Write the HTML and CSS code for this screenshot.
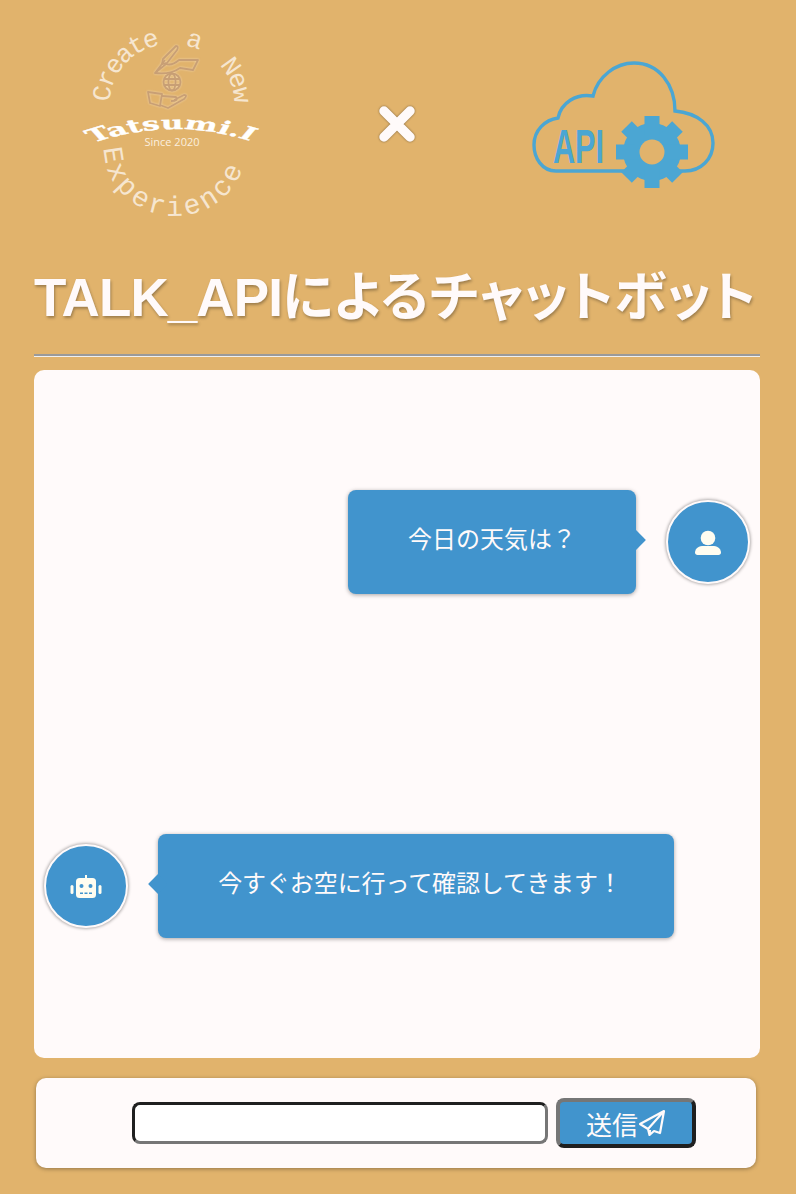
FILE: index.html
```html
<!DOCTYPE html>
<html lang="ja">
<head>
<meta charset="utf-8">
<title>TALK_APIによるチャットボット</title>
<link rel="stylesheet" href="styles.css">
</head>
<body>
<main class="page">
  <header class="logos">
    <svg class="logo-main" viewBox="0 0 220 220" width="220" height="220" aria-label="Tatsumi.I">
      <defs>
        <path id="arcTop" d="M50 92 A62 58 0 0 1 174 92"/>
        <path id="arcMid" d="M64 133 Q112 105 160 134"/>
        <path id="arcBot" d="M44 138 A68 65 0 0 0 186 138"/>
      </defs>
      <g class="logo-glyphs">
        <path d="M116 36 Q119 36 117 40 L107 53 L102 54 L103 49 Z"/>
        <path d="M95 63 L105 50 M106 54 Q112 56 119 50 L138 50 L133 60 L120 58 Q110 65 95 63 Z"/>
        <circle cx="112" cy="72" r="8.500"/>
        <ellipse cx="112" cy="72" rx="3.600" ry="8.500"/>
        <path d="M104 69 H120 M104 75 H120"/>
        <path d="M88 82 L102 84 L100 96 L90 93 Z"/>
        <path d="M102 86 L116 87 Q119 91 111 91 M114 90 L124 85 Q128 85 124 89 L108 98 L100 95"/>
      </g>
      <g class="logo-text-thin">
        <text><textPath href="#arcTop">Create  a  New</textPath></text>
        <text class="logo-lower"><textPath href="#arcBot">Experience</textPath></text>
      </g>
      <g transform="translate(116 0) scale(1.73 1) translate(-112 0)">
        <text class="logo-name"><textPath href="#arcMid">Tatsumi.I</textPath></text>
      </g>
      <text class="logo-since" x="112" y="136" text-anchor="middle">Since 2020</text>
    </svg>
    <svg class="logo-x" viewBox="0 0 40 40" width="40" height="40" aria-label="×">
      <path d="M7 7 L33 33 M33 7 L7 33"/>
    </svg>
    <svg class="logo-api" viewBox="-3 -3 200 150" width="200" height="150" aria-label="API">
      <path class="cloud" d="M135 108 H22 C8 108 0 95 0 82 C0 67 11 57 24 55 C27 40 42 30 59 33 C64 13 82 0 100 0 C125 0 141 22 141 48 C163 50 179 62 179 80 C179 96 167 108 151 108 H142"/>
      <text class="api-text" x="19" y="100" textLength="51" lengthAdjust="spacingAndGlyphs">API</text>
      <g class="gear">
        <circle cx="118" cy="89" r="29"/>
        <rect x="110.500" y="53" width="15" height="72"/>
        <rect x="110.500" y="53" width="15" height="72" transform="rotate(45 118 89)"/>
        <rect x="110.500" y="53" width="15" height="72" transform="rotate(90 118 89)"/>
        <rect x="110.500" y="53" width="15" height="72" transform="rotate(135 118 89)"/>
      </g>
      <circle class="gear-hole" cx="118" cy="89" r="12.500"/>
    </svg>
  </header>

  <h1 class="title"><span class="title-latin">TALK_API</span><span class="title-kana">によるチャットボット</span></h1>
  <hr class="rule">

  <section class="chat">
    <div class="row row-user">
      <p class="bubble bubble-user">今日の天気は？</p>
      <div class="avatar">
        <svg viewBox="0 0 26 25" width="26" height="25">
          <circle cx="13" cy="8" r="7.300"/>
          <path d="M7 16 H19 C23.500 16 26 20 26 22.500 C26 24 25 25 23.500 25 H2.500 C1 25 0 24 0 22.500 C0 20 2.500 16 7 16 Z"/>
        </svg>
      </div>
    </div>
    <div class="row row-bot">
      <div class="avatar">
        <svg viewBox="0 0 32 26" width="32" height="26">
          <rect x="15" y="0" width="2" height="5"/>
          <rect x="6" y="3" width="20" height="20" rx="3.500"/>
          <rect x="0.500" y="10" width="3" height="9" rx="1.500"/>
          <rect x="28.500" y="10" width="3" height="9" rx="1.500"/>
          <g class="robot-face">
            <circle cx="11.500" cy="11" r="2"/>
            <circle cx="20.500" cy="11" r="2"/>
            <rect x="10" y="17.500" width="3" height="1.500"/>
            <rect x="14.500" y="17.500" width="3" height="1.500"/>
            <rect x="19" y="17.500" width="3" height="1.500"/>
          </g>
        </svg>
      </div>
      <p class="bubble bubble-bot">今すぐお空に行って確認してきます！</p>
    </div>
  </section>

  <form class="composer">
    <input class="field" type="text" aria-label="メッセージ">
    <button class="send" type="button">送信<svg viewBox="0 0 28 28" width="28" height="28"><path d="M26 2 L2 15 L10 20 L11.500 26 L16 22 L22 24 Z M26 2 L10 20 M11.500 26 L12 21"/></svg></button>
  </form>
</main>
</body>
</html>
```
FILE: styles.css
```css
* { box-sizing: border-box; }
html, body { margin: 0; padding: 0; }
body {
  background: #e1b36c;
  font-family: "Liberation Sans", "Noto Sans CJK JP", sans-serif;
  overflow: hidden;
}
.page {
  width: 796px;
  height: 1194px;
  padding: 0 36px 0 34px;
}
.logos {
  height: 250px;
  display: flex;
  align-items: flex-start;
  padding: 10px 0 0 26px;
}
.logo-main { flex: none; }
.logo-x { flex: none; margin: 94px 0 0 97px; }
.logo-api { flex: none; margin: 50px 0 0 114px; }

.logo-glyphs {
  fill: none;
  stroke: #c89f75;
  stroke-width: 1.800;
  stroke-linejoin: round;
  filter: drop-shadow(0 0 1px rgba(255,245,230,.5));
}
.logo-text-thin text {
  font-family: "Liberation Mono", monospace;
  font-size: 26px;
  fill: #f6e6d0;
  letter-spacing: -2.200px;
  white-space: pre;
}
.logo-text-thin .logo-lower { font-size: 28px; letter-spacing: 3.200px; }
.logo-name {
  font-family: "DejaVu Serif", serif;
  font-weight: 700;
  font-size: 18px;
  fill: #fff;
  stroke: #fff;
  stroke-width: .3;
}
.logo-since {
  font-family: "Open Sans", sans-serif;
  font-size: 11px;
  fill: #fbefdf;
}
.logo-x {
  fill: none;
  stroke: #fffafa;
  stroke-width: 9.500;
  stroke-linecap: round;
  filter: drop-shadow(0 0 1px rgba(0,0,0,.45));
}
.cloud { fill: none; stroke: #4ba6d3; stroke-width: 3.400; }
.api-text {
  font-family: "Liberation Sans", sans-serif;
  font-weight: 700;
  font-size: 48px;
  fill: #4ba6d3;
}
.gear { fill: #4ba6d3; }
.gear-hole { fill: #e1b36c; }

.title {
  margin: 0;
  height: 104px;
  padding-top: 15px;
  font-size: 53px;
  line-height: 66px;
  font-weight: 700;
  font-feature-settings: "palt";
  color: #fffafa;
  white-space: nowrap;
  text-shadow: 1px 2px 3px rgba(0,0,0,.3);
}
.title-latin { letter-spacing: -.9px; }
.title-kana { letter-spacing: .4px; }
.rule {
  margin: 0 0 13px;
  height: 3px;
  border: 0;
  border-top: 2px solid #9a9a9a;
  border-bottom: 1px solid #f0f0f0;
}
.chat {
  height: 688px;
  background: #fffafa;
  border-radius: 10px;
  padding: 120px 10px 0;
  display: flex;
  flex-direction: column;
  gap: 240px;
}
.row { display: flex; align-items: center; gap: 30px; }
.row-user { justify-content: flex-end; }
.bubble {
  position: relative;
  margin: 0;
  height: 104px;
  padding-bottom: 10px;
  display: flex;
  align-items: center;
  justify-content: center;
  background: #4194cd;
  color: #fffafa;
  font-family: "Noto Sans CJK JP", sans-serif;
  font-size: 24px;
  border-radius: 8px;
  box-shadow: 0 1px 4px rgba(0,0,0,.35);
}
.bubble-user { width: 288px; }
.bubble-bot { width: 516px; padding-left: 8px; letter-spacing: -.1px; }
.bubble::after {
  content: "";
  position: absolute;
  top: 43px;
  width: 14px;
  height: 14px;
  background: #4194cd;
  transform: rotate(45deg);
}
.bubble-user::after { right: -7px; }
.bubble-bot::after { left: -7px; }
.avatar {
  flex: none;
  width: 84px;
  height: 84px;
  border-radius: 50%;
  background: #4194cd;
  border: 2px solid #fffafa;
  box-shadow: 0 0 3px 1px rgba(0,0,0,.3);
  display: flex;
  align-items: center;
  justify-content: center;
}
.avatar svg { fill: #fffdf0; }
.robot-face { fill: #4194cd; }
.row-bot .avatar svg { transform: translateY(2px); }
.composer {
  margin: 20px 4px 0 2px;
  height: 90px;
  background: #fffafa;
  border-radius: 10px;
  box-shadow: 0 1px 4px rgba(0,0,0,.35);
  padding-left: 96px;
  display: flex;
  align-items: center;
  gap: 8px;
}
.field {
  width: 416px;
  height: 42px;
  padding: 0;
  background: #fff;
  border: 3.500px solid;
  border-color: #1f1f1f #767676 #767676 #1f1f1f;
  border-radius: 8px;
}
.send {
  width: 140px;
  height: 50px;
  padding: 0;
  display: flex;
  align-items: center;
  justify-content: center;
  background: #4194cd;
  color: #fffafa;
  font-family: "Noto Sans CJK JP", sans-serif;
  font-size: 26px;
  border: 4px solid;
  border-color: #767676 #1f1f1f #1f1f1f #767676;
  border-radius: 8px;
}
.send svg { fill: none; stroke: #fffafa; stroke-width: 2.200; stroke-linejoin: round; }
```
